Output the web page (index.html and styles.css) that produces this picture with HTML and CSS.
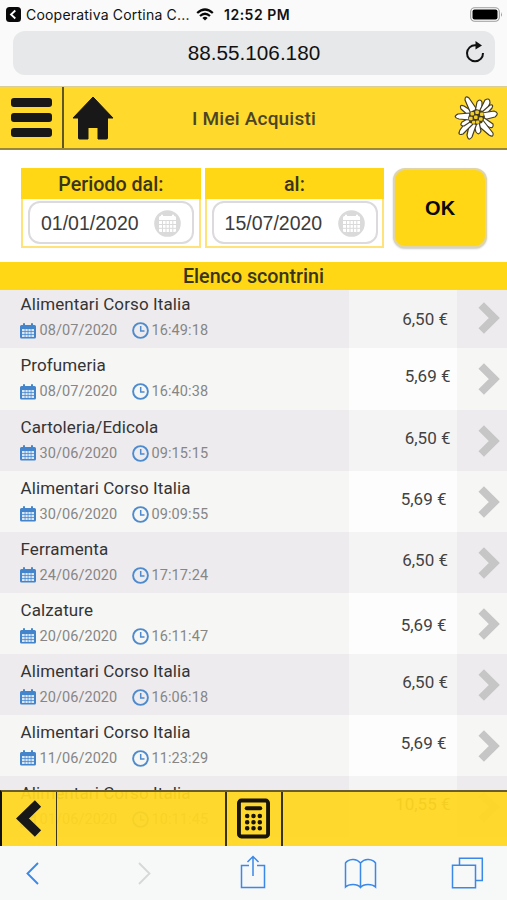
FILE: index.html
```html
<!DOCTYPE html>
<html lang="it">
<head>
<meta charset="utf-8">
<meta name="viewport" content="width=device-width">
<title>I Miei Acquisti</title>
<link rel="stylesheet" href="styles.css">
</head>
<body>
<svg class="defs" width="0" height="0">
  <symbol id="cal" viewBox="0 0 16 16">
    <path fill="#4384cb" d="M0 3.500Q0 2 1.500 2H3V.3H5V2H11V.3H13V2H14.500Q16 2 16 3.500V14Q16 15.500 14.500 15.500H1.500Q0 15.500 0 14Z"/>
    <path fill="#d8e6f5" d="M2 6H4.700V8.300H2ZM5.400 6H7.700V8.300H5.400ZM8.400 6H10.700V8.300H8.400ZM11.400 6H14V8.300H11.400ZM2 9H4.700V11.200H2ZM5.400 9H7.700V11.200H5.400ZM8.400 9H10.700V11.200H8.400ZM11.400 9H14V11.200H11.400ZM2 11.900H4.700V14H2ZM5.400 11.900H7.700V14H5.400ZM8.400 11.900H10.700V14H8.400ZM11.400 11.900H14V14H11.400Z"/>
  </symbol>
  <symbol id="clock" viewBox="0 0 17 17">
    <circle cx="8.500" cy="8.500" r="7.400" fill="none" stroke="#4d8bce" stroke-width="1.900"/>
    <path d="M8.700 4V9H12.500" fill="none" stroke="#4d8bce" stroke-width="1.500"/>
  </symbol>
  <symbol id="chev" viewBox="0 0 22 32">
    <path d="M3.200 3L16.300 16L3.200 29" fill="none" stroke="#c6c6c6" stroke-width="7.800"/>
  </symbol>
  <symbol id="pick" viewBox="0 0 27 27">
    <circle cx="13.500" cy="13.500" r="13.300" fill="#dadada"/>
    <path fill="#fff" d="M5 10V7.500Q5 6 6.500 6H7V4.800H9V6H18V4.800H20V6H20.500Q22 6 22 7.500V10Z"/>
    <path fill="#fff" d="M5 11H22V20.500Q22 22 20.500 22H6.500Q5 22 5 20.500Z"/>
    <path d="M5 14.500H22M5 18.300H22M8.500 11V22M12 11V22M15.400 11V22M18.800 11V22" stroke="#dadada" stroke-width="1"/>
  </symbol>
</svg>
<div class="screen">
  <div class="status">
    <svg class="back-app" viewBox="0 0 15 15"><rect width="15" height="15" rx="3.500" fill="#080808"/><path d="M9.300 3.500L5 7.500L9.300 11.500" fill="none" stroke="#fff" stroke-width="1.800"/></svg>
    <span class="app-name">Cooperativa Cortina C...</span>
    <svg class="wifi" viewBox="0 0 18 13"><path d="M1.200 5Q9-2 16.800 5" fill="none" stroke="#080808" stroke-width="2.300"/><path d="M4 8Q9 3.500 14 8" fill="none" stroke="#080808" stroke-width="2.200"/><path d="M6.400 9.900Q9 7.700 11.600 9.900L9 12.600Z" fill="#080808"/></svg>
    <span class="time">12:52 PM</span>
    <svg class="battery" viewBox="0 0 33 15"><rect x=".7" y=".7" width="28.600" height="13.600" rx="4" fill="#fff" stroke="#9b9b9b" stroke-width="1.100"/><rect x="2.500" y="2.500" width="25" height="10" rx="2" fill="#000"/><path d="M31 5Q32.500 7.500 31 10Z" fill="#888"/></svg>
  </div>
  <div class="address">
    <span class="host">88.55.106.180</span>
    <svg class="reload" viewBox="0 0 20 22"><path d="M12 4.300H10.500A8 8 0 1 0 18 12" fill="none" stroke="#111" stroke-width="2"/><path d="M10.500 0L17 4.500L10.500 8.500Z" fill="#111"/></svg>
  </div>
  <header class="topbar">
    <div class="menu"><i></i><i></i><i></i></div>
    <svg class="home" viewBox="0 0 42 44"><path fill="#181818" stroke="#181818" stroke-linejoin="round" d="M21 1L41 22H35.500V42Q35.500 43 34.500 43H26V31.500H16V43H7.500Q6.500 43 6.500 42V22H1Z"/></svg>
    <h1>I Miei Acquisti</h1>
    <svg class="flower" viewBox="-22 -22 44 44">
      <g fill="#fff" stroke="#453d22" stroke-width="1.200" stroke-linejoin="round">
        <path d="M-15-9Q-17-14-12-12L-1-5L-6-1Z"/>
        <path d="M-5-4L-11-18Q-11-23-7-20L2-7Z"/>
        <path d="M-1-6L1-16Q4-20 6-16L6-5Z"/>
        <path d="M3-6L9-18Q14-21 14-15L9-3Z"/>
        <path d="M6-6L14-13Q18-14 16-10L9-2Z"/>
        <path d="M6-5L18-7Q24-5 19-1L7 2Z"/>
        <path d="M7-1L17 6Q18 11 13 9L4 5Z"/>
        <path d="M6 1L17 15Q18 20 13 17L0 6Z"/>
        <path d="M3 4L5 13Q3 18 0 14L-3 5Z"/>
        <path d="M1 5L-4 19Q-8 24-9 17L-6 3Z"/>
        <path d="M-2 5L-13 16Q-19 18-16 12L-8 1Z"/>
        <path d="M-6 4L-12 8Q-17 8-14 4L-7 0Z"/>
        <path d="M-6 2L-17 1Q-24-1-18-4L-6-5Z"/>
      </g>
      <path d="M-6-6L0-9L7-7L9-1L6 5L0 7L-6 5L-8 0Z" fill="#453d22"/>
      <g fill="#f2cf28"><rect x="-5.500" y="-6" width="3.600" height="3.600" rx="1"/><rect x="-.7" y="-7.500" width="3.600" height="3.600" rx="1"/><rect x="4" y="-5.500" width="3.600" height="3.600" rx="1"/><rect x="-7" y="-1.300" width="3.600" height="3.600" rx="1"/><rect x="-2" y="-2.500" width="3.600" height="3.600" rx="1"/><rect x="3" y="-.8" width="3.600" height="3.600" rx="1"/><rect x="-4" y="2.800" width="3.300" height="3" rx="1"/><rect x="0" y="2.500" width="3.300" height="3.300" rx="1"/></g>
    </svg>
  </header>
  <form class="filters">
    <div class="field"><label>Periodo dal:</label><div class="date"><span>01/01/2020</span><svg><use href="#pick"/></svg></div></div>
    <div class="field"><label>al:</label><div class="date"><span>15/07/2020</span><svg><use href="#pick"/></svg></div></div>
    <button type="button">OK</button>
  </form>
  <h2>Elenco scontrini</h2>
  <ul class="list">
    <li><div class="info"><b>Alimentari Corso Italia</b><p><svg class="cal"><use href="#cal"/></svg><span class="day">08/07/2020</span><svg class="clock"><use href="#clock"/></svg><span class="hour">16:49:18</span></p></div><div class="price">6,50 €</div><div class="go"><svg><use href="#chev"/></svg></div></li>
    <li><div class="info"><b>Profumeria</b><p><svg class="cal"><use href="#cal"/></svg><span class="day">08/07/2020</span><svg class="clock"><use href="#clock"/></svg><span class="hour">16:40:38</span></p></div><div class="price far high">5,69 €</div><div class="go"><svg><use href="#chev"/></svg></div></li>
    <li><div class="info"><b>Cartoleria/Edicola</b><p><svg class="cal"><use href="#cal"/></svg><span class="day">30/06/2020</span><svg class="clock"><use href="#clock"/></svg><span class="hour">09:15:15</span></p></div><div class="price far high">6,50 €</div><div class="go"><svg><use href="#chev"/></svg></div></li>
    <li><div class="info"><b>Alimentari Corso Italia</b><p><svg class="cal"><use href="#cal"/></svg><span class="day">30/06/2020</span><svg class="clock"><use href="#clock"/></svg><span class="hour">09:09:55</span></p></div><div class="price near high">5,69 €</div><div class="go"><svg><use href="#chev"/></svg></div></li>
    <li><div class="info"><b>Ferramenta</b><p><svg class="cal"><use href="#cal"/></svg><span class="day">24/06/2020</span><svg class="clock"><use href="#clock"/></svg><span class="hour">17:17:24</span></p></div><div class="price high">6,50 €</div><div class="go"><svg><use href="#chev"/></svg></div></li>
    <li><div class="info"><b>Calzature</b><p><svg class="cal"><use href="#cal"/></svg><span class="day">20/06/2020</span><svg class="clock"><use href="#clock"/></svg><span class="hour">16:11:47</span></p></div><div class="price near">5,69 €</div><div class="go"><svg><use href="#chev"/></svg></div></li>
    <li><div class="info"><b>Alimentari Corso Italia</b><p><svg class="cal"><use href="#cal"/></svg><span class="day">20/06/2020</span><svg class="clock"><use href="#clock"/></svg><span class="hour">16:06:18</span></p></div><div class="price high">6,50 €</div><div class="go"><svg><use href="#chev"/></svg></div></li>
    <li><div class="info"><b>Alimentari Corso Italia</b><p><svg class="cal"><use href="#cal"/></svg><span class="day">11/06/2020</span><svg class="clock"><use href="#clock"/></svg><span class="hour">11:23:29</span></p></div><div class="price near high">5,69 €</div><div class="go"><svg><use href="#chev"/></svg></div></li>
    <li><div class="info"><b>Alimentari Corso Italia</b><p><svg class="cal"><use href="#cal"/></svg><span class="day">01/06/2020</span><svg class="clock"><use href="#clock"/></svg><span class="hour">10:11:45</span></p></div><div class="price far high">10,55 €</div><div class="go"><svg><use href="#chev"/></svg></div></li>
  </ul>
  <footer>
    <div class="actions">
      <div class="prev"><svg width="26" height="37" viewBox="0 0 26 37"><path d="M22 3.500L6.500 18.500L22 33.500" fill="none" stroke="#181818" stroke-width="9"/></svg></div>
      <div class="gap"></div>
      <div class="calc"><svg width="33" height="41" viewBox="0 0 34 41"><rect x="2" y="2" width="30" height="37" rx="2.500" fill="none" stroke="#181508" stroke-width="4"/><path d="M10 10H24" stroke="#181508" stroke-width="4" stroke-linecap="round"/><path d="M10.500 18H25M10.500 24.300H25M10.500 30.500H25" stroke="#181508" stroke-width="4.700" stroke-linecap="round" stroke-dasharray="0 6.500"/></svg></div>
    </div>
    <nav>
      <svg viewBox="0 0 507 54" fill="none" stroke="#3a88e8" stroke-width="1.500">
        <path d="M38 17L27.500 27.500L38 38" stroke-width="1.900"/>
        <path d="M139 17L149.500 27.500L139 38" stroke="#d5d7d9" stroke-width="1.800"/>
        <path d="M249 19.500H241.500V41.500H264.500V19.500H257M253 30V11M247.500 16L253 10.500L258.500 16"/>
        <path d="M360.500 17Q357 13 352.500 13.500Q347.500 14 345.500 17V41Q348 38.500 353 38.500Q358 38.500 360.500 41.500Q363 38.500 368 38.500Q373 38.500 375.500 41V17Q373.500 14 368.500 13.500Q364 13 360.500 17V41.500"/>
        <path d="M452.500 19.200H475.500V41.800H452.500ZM459.500 19V12.300H482.300V34.500H476"/>
      </svg>
    </nav>
  </footer>
</div>
</body>
</html>
```
FILE: styles.css
```css
* { box-sizing: border-box; }
body { margin: 0; background: #fff; font-family: Roboto, "Liberation Sans", sans-serif; }
h1, h2, p, ul { margin: 0; padding: 0; }
svg { display: block; flex: none; }
.defs { position: absolute; }
.screen { position: relative; width: 507px; height: 900px; overflow: hidden; }

.status { display: flex; align-items: center; height: 30px; padding: 0 4px 2px 6px; background: #f9faf9; color: #111; font-family: Inter, sans-serif; white-space: nowrap; }
.back-app { width: 15px; height: 15px; }
.app-name { width: 165px; margin-left: 5px; font-size: 14px; letter-spacing: .2px; }
.wifi { width: 18px; height: 13px; margin-left: 5px; }
.time { margin-left: 10px; font-size: 14px; font-weight: 600; letter-spacing: .5px; }
.battery { width: 33px; height: 15px; margin-left: auto; }

.address { display: flex; align-items: center; height: 56px; padding: 0 12px 11px 13px; background: #f9faf9; position: relative; font-family: "Liberation Sans", sans-serif; }
.host { display: flex; align-items: center; justify-content: center; width: 482px; height: 44px; background: #e6e8e9; border-radius: 12px; font-size: 20.700px; color: #111; }
.reload { position: absolute; right: 22px; top: 11px; width: 20px; height: 22px; }

.topbar { display: flex; align-items: center; height: 64px; background: #ffd92b; border-top: 1px solid #d9cf94; border-bottom: 2px solid #9a8836; }
.menu { display: flex; flex-direction: column; justify-content: center; gap: 6px; width: 64px; height: 100%; padding-left: 11px; border-right: 2px solid #5f5526; }
.menu i { width: 41px; height: 9px; background: #181818; border-radius: 3px; }
.home { width: 42px; height: 44px; margin-left: 8px; }
h1 { width: 280px; text-align: center; font-size: 19px; font-weight: 500; color: #4b4528; padding-top: 2px; letter-spacing: .2px; }
.flower { width: 44px; height: 44px; margin-left: 60px; }

.filters { display: flex; gap: 4px; height: 112px; padding: 18px 20px 13px 21px; }
.field { width: 180px; height: 80px; border: 2px solid #ffe37a; border-top: 0; }
.field label { display: block; height: 31px; margin: 0 -2px; background: #ffd714; text-align: center; font-size: 19.700px; line-height: 34px; font-weight: 500; color: #38351b; }
.date { display: flex; align-items: center; justify-content: space-between; width: 166px; height: 43px; margin: 2px 0 0 5px; padding: 1px 11px 0; border: 2px solid #dcdadd; border-radius: 12px; font: 19.500px "Liberation Sans", sans-serif; color: #3c3c3c; }
.date span { padding-top: 1px; }
.date svg { width: 27px; height: 27px; }
button { width: 94px; height: 80px; margin-left: 5px; padding: 0; background: #ffd714; border: 2px solid #dfd4aa; border-radius: 12px; font: bold 20px "Liberation Sans", sans-serif; color: #090909; box-shadow: 0 1px 2px #ccc; }

h2 { position: relative; z-index: 1; height: 28px; background: #ffd714; text-align: center; font-size: 19.700px; font-weight: 500; line-height: 30px; color: #38351b; }
.list { list-style: none; margin-top: -2.700px; }
.list li { display: grid; grid-template-columns: 349px 108px 50px; height: 61.100px; background: #f6f6f4; }
.list li:nth-child(odd) { background: #eeebee; }
.info { padding: 5px 0 0 20.500px; }
.info b { display: block; height: 26px; line-height: 25px; font-size: 17px; font-weight: 400; color: #343434; letter-spacing: .1px; }
.info p { display: flex; align-items: center; height: 25px; margin-left: -1px; font-size: 14.500px; color: #868686; }
.cal { width: 16px; height: 16px; }
.day { width: 96px; padding-left: 4px; letter-spacing: .06px; }
.clock { width: 17px; height: 17px; }
.hour { padding-left: 3px; letter-spacing: .1px; }
.price { padding: 20px 9px 0 0; background: #fdfdfd; text-align: right; font-size: 17px; line-height: 25px; color: #424242; }
li:nth-child(odd) .price { background: #f5f4f5; }
.price.high { padding-top: 16px; }
.price.far { padding-right: 6.500px; }
.price.near { padding-right: 10.500px; }
.go { padding: 15px 0 0 21px; }
.go svg { width: 22px; height: 32px; }

footer { position: absolute; left: 0; right: 0; bottom: 0; height: 110px; }
.actions { display: flex; height: 56px; background: rgba(255, 215, 32, .94); border-top: 2px solid #675d31; border-left: 2px solid #111; }
.prev { width: 55px; padding: 8px 0 0 14px; border-right: 1px solid #393419; }
.gap { width: 170px; border-right: 2px solid #393419; }
.calc { width: 56px; padding: 6px 0 0 10px; border-right: 2px solid #393419; }
nav { height: 54px; background: #f7f8f8; }
nav svg { width: 507px; height: 54px; }
```
